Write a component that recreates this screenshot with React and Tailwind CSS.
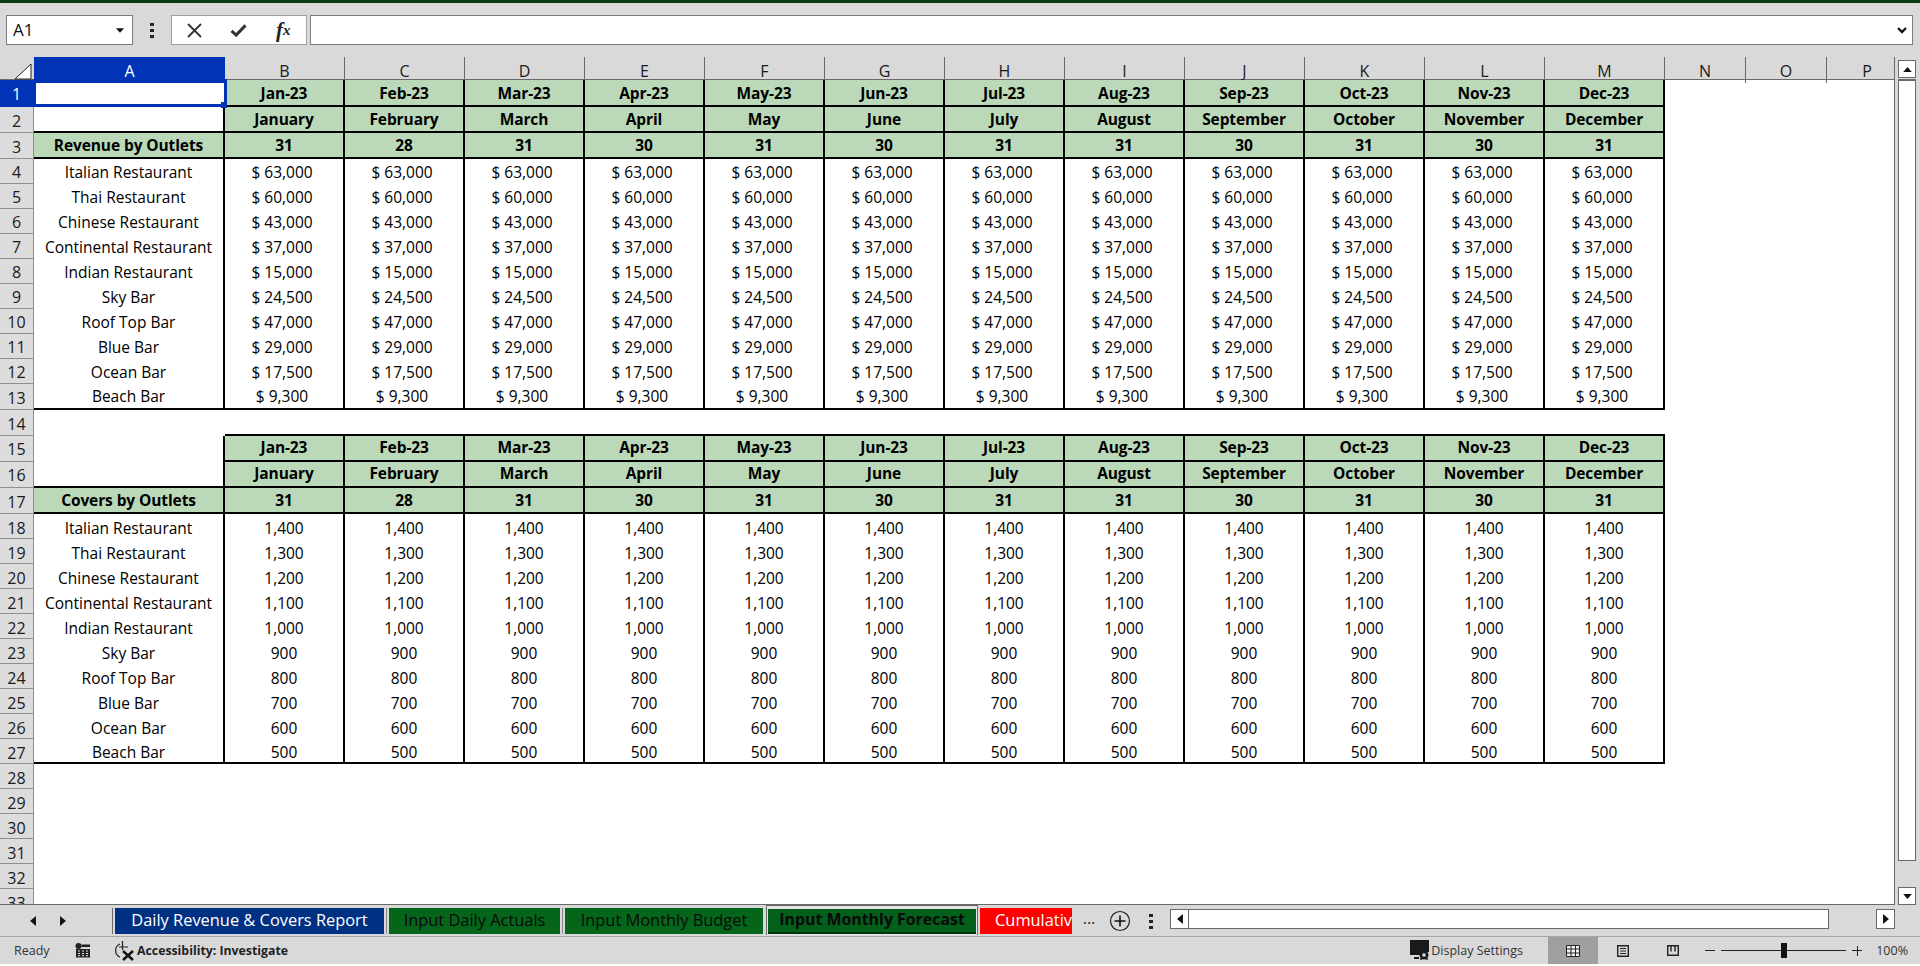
import React from 'react'

const dates = ['Jan-23', 'Feb-23', 'Mar-23', 'Apr-23', 'May-23', 'Jun-23', 'Jul-23', 'Aug-23', 'Sep-23', 'Oct-23', 'Nov-23', 'Dec-23']
const months = ['January', 'February', 'March', 'April', 'May', 'June', 'July', 'August', 'September', 'October', 'November', 'December']
const days = ['31', '28', '31', '30', '31', '30', '31', '31', '30', '31', '30', '31']
const letters = ['A', 'B', 'C', 'D', 'E', 'F', 'G', 'H', 'I', 'J', 'K', 'L', 'M', 'N', 'O', 'P']

const outlets = [
  ['Italian Restaurant', '$ 63,000', '1,400'],
  ['Thai Restaurant', '$ 60,000', '1,300'],
  ['Chinese Restaurant', '$ 43,000', '1,200'],
  ['Continental Restaurant', '$ 37,000', '1,100'],
  ['Indian Restaurant', '$ 15,000', '1,000'],
  ['Sky Bar', '$ 24,500', '900'],
  ['Roof Top Bar', '$ 47,000', '800'],
  ['Blue Bar', '$ 29,000', '700'],
  ['Ocean Bar', '$ 17,500', '600'],
  ['Beach Bar', '$ 9,300', '500'],
]

const GRID = 'grid grid-cols-[34px_191px_repeat(12,120px)_81px_81px_81px]'
const GREEN = 'bg-[#bbd9b9] font-bold text-[15.2px] tracking-[-0.1px] border-r-2 border-b-2 border-black'

function Tri({ dir, className = '' }) {
  const pts = { left: '7,0 7,12 0,6', right: '0,0 0,12 7,6', up: '0,7 12,7 6,0', down: '0,0 12,0 6,7' }
  const box = dir === 'left' || dir === 'right' ? '0 0 7 12' : '0 0 12 7'
  return (
    <svg viewBox={box} className={className}>
      <polygon points={pts[dir]} fill="#111" />
    </svg>
  )
}

function RowHead({ n, active, top = 'top-[2px]' }) {
  return (
    <div className={`flex items-center justify-center border-r border-b text-[16px] ${active ? 'bg-[#0033b5] text-white border-[#0033b5]' : 'bg-[#dcdcdc] text-[#1a1a1a] border-[#8f8f8f]'}`}>
      <span className={`relative ${top}`}>{n}</span>
    </div>
  )
}

function Cell({ className = '', top = 'top-[2px]', children }) {
  return (
    <div className={`flex items-center justify-center text-[15.5px] text-black ${className}`}>
      <span className={`relative ${top}`}>{children}</span>
    </div>
  )
}

function Row({ n, h, active, a, aClass = '', values, cellClass = '', top }) {
  return (
    <div className={`${GRID} ${h}`}>
      <RowHead n={n} active={active} top={top} />
      <Cell className={`relative ${aClass}`} top={top}>{a}</Cell>
      {values && values.map((v, i) => (
        <Cell key={i} className={cellClass} top={top}>{v}</Cell>
      ))}
    </div>
  )
}

function DataRows({ start, col, lastTall, cellExtra = '', top }) {
  return outlets.map((o, i) => (
    <Row
      key={o[0]}
      n={start + i}
      h={lastTall && i === 9 ? 'h-[26px]' : 'h-[25px]'}
      top={top}
      a={o[0]}
      aClass={`border-r-2 border-black ${i === 9 ? 'border-b-2' : ''}`}
      values={Array(12).fill(o[col])}
      cellClass={`border-r-2 border-black ${cellExtra} ${i === 9 ? 'border-b-2' : ''}`}
    />
  ))
}

function Sheet() {
  return (
    <div className="w-[1895px] h-full overflow-hidden bg-white border-r border-b border-[#6a6a6a]">
      <div className={`${GRID} h-[23px] bg-[#d9d9d9] border-b border-[#6a6a6a]`}>
        <div className="flex items-end justify-end pb-[3px] pr-[2px]">
          <svg viewBox="0 0 18 17" className="w-[18px] h-[17px]">
            <polygon points="17,1 17,16 1,16" fill="#fff" stroke="#222" strokeWidth="1" />
          </svg>
        </div>
        {letters.map((l, i) => (
          <div
            key={l}
            className={`flex items-center justify-center text-[16px] pt-[2px] ${i === 0 ? 'bg-[#0033b5] text-white' : 'text-[#1a1a1a] border-r border-[#6a6a6a]'}`}
          >
            {l}
          </div>
        ))}
      </div>

      <div className={`${GRID} h-[27px]`}>
        <RowHead n={1} active top="top-px" />
        <div className="relative">
          <div className="absolute -left-px -top-px w-[194px] h-[28px] border-[3px] border-[#0033b5] z-10" />
          <div className="absolute left-[187px] top-[22px] w-[6px] h-[6px] bg-[#0033b5] z-10" />
        </div>
        {dates.map((d) => <Cell key={d} className={GREEN} top="top-px">{d}</Cell>)}
      </div>
      <Row n={2} h="h-[26px]" top="top-px" aClass="border-r-2 border-b-2 border-black" values={months} cellClass={GREEN} />
      <Row n={3} h="h-[26px]" top="top-px" a="Revenue by Outlets" aClass={GREEN} values={days} cellClass={GREEN} />
      <DataRows start={4} col={1} lastTall cellExtra="pr-[4px]" top="top-px" />

      <Row n={14} h="h-[26px]" top="top-px" values={Array(12).fill('')} cellClass="border-b-2 border-black" />
      <Row n={15} h="h-[26px]" top="top-0" aClass="border-r-2 border-black" values={dates} cellClass={GREEN} />
      <Row n={16} h="h-[26px]" top="top-0" aClass="border-r-2 border-b-2 border-black" values={months} cellClass={GREEN} />
      <Row n={17} h="h-[26px]" top="top-px" a="Covers by Outlets" aClass={GREEN} values={days} cellClass={GREEN} />
      <DataRows start={18} col={2} />

      {[28, 29, 30, 31, 32, 33].map((n) => <Row key={n} n={n} h="h-[25px]" />)}
    </div>
  )
}

function FormulaBar() {
  return (
    <div className="h-[54px] bg-[#d9d9d9] flex items-start pt-[12px] pl-[6px] pr-[7px] shrink-0">
      <div className="w-[127px] h-[30px] bg-white border border-[#7d7d7d] flex items-center justify-between pl-[6px] pr-[8px] text-[17px] text-[#111]">
        A1
        <Tri dir="down" className="w-[8px] h-[5px]" />
      </div>
      <div className="w-[38px] h-[30px] flex flex-col items-center justify-center gap-[3px]">
        <div className="w-[4px] h-[3px] bg-[#222]" />
        <div className="w-[4px] h-[3px] bg-[#222]" />
        <div className="w-[4px] h-[3px] bg-[#222]" />
      </div>
      <div className="w-[136px] h-[30px] bg-white border border-[#a0a0a0] flex items-center text-[#222]">
        <div className="w-[45px] flex justify-center">
          <svg viewBox="0 0 15 15" className="w-[15px] h-[15px]">
            <path d="M1 1 L14 14 M14 1 L1 14" fill="none" stroke="#333" strokeWidth="1.8" />
          </svg>
        </div>
        <div className="w-[45px] flex justify-center">
          <svg viewBox="0 0 18 14" className="w-[17px] h-[13px]">
            <path d="M1.5 7.5 L6.5 12 L16.5 1.5" fill="none" stroke="#333" strokeWidth="3.2" />
          </svg>
        </div>
        <div className="w-[46px] flex justify-center [font-family:'Liberation_Serif',serif] italic font-bold text-[21px] leading-none">
          f<span className="text-[15px] relative top-[3px]">x</span>
        </div>
      </div>
      <div className="flex-1 h-[30px] ml-[3px] bg-white border border-[#7d7d7d] flex items-center justify-end pr-[5px]">
        <svg viewBox="0 0 10 7" className="w-[10px] h-[7px]">
          <path d="M1 1 L5 5 L9 1" fill="none" stroke="#111" strokeWidth="2.4" />
        </svg>
      </div>
    </div>
  )
}

function VScroll() {
  return (
    <div className="flex-1 bg-[#d9d9d9] pl-[3px] pr-[4px] pt-[3px] flex flex-col">
      <div className="h-[18px] bg-white border border-[#6a6a6a] flex items-center justify-center">
        <Tri dir="up" className="w-[9px] h-[5px]" />
      </div>
      <div className="h-[782px] mt-[1px] bg-white border border-t-2 border-[#6a6a6a]" />
      <div className="h-[18px] mt-[26px] bg-white border border-[#6a6a6a] flex items-center justify-center">
        <Tri dir="down" className="w-[9px] h-[5px]" />
      </div>
    </div>
  )
}

function Tab({ w, className, children }) {
  return (
    <div className={`h-[26px] shrink-0 overflow-hidden whitespace-nowrap flex items-center text-[16.4px] leading-none pb-[2px] ${w} ${className}`}>
      {children}
    </div>
  )
}

function TabBar() {
  return (
    <div className="h-[32px] bg-[#d9d9d9] border-b border-[#a6a6a6] flex items-start pt-[3px] shrink-0">
      <div className="w-[113px] h-[26px] flex items-center pl-[30px] gap-[24px] border-r border-[#6a6a6a]">
        <Tri dir="left" className="w-[6px] h-[10px]" />
        <Tri dir="right" className="w-[6px] h-[10px]" />
      </div>
      <Tab w="w-[269px] ml-[2px] justify-center" className="bg-[#003082] text-white">Daily Revenue &amp; Covers Report</Tab>
      <div className="w-px h-[26px] ml-[2px] mr-[2px] bg-[#8a8a8a]" />
      <Tab w="w-[171px] justify-center" className="bg-[#05651a] text-[#0a0a0a]">Input Daily Actuals</Tab>
      <div className="w-px h-[26px] mx-[2px] bg-[#8a8a8a]" />
      <Tab w="w-[198px] justify-center" className="bg-[#05651a] text-[#0a0a0a]">Input Monthly Budget</Tab>
      <div className="w-[212px] h-[30px] -mt-[3px] ml-[3px] shrink-0 bg-[#e6e6e6] border-x border-t border-[#6a6a6a] px-[1px] pt-[3px]">
        <div className="h-[25px] bg-[#03601a] border-b-2 border-[#00330d] flex items-center justify-center font-bold text-[15.9px] leading-none pb-[1px] text-[#0a0a0a] whitespace-nowrap">
          Input Monthly Forecast
        </div>
      </div>
      <Tab w="w-[92px] ml-[2px] pl-[15px]" className="bg-[#ff0000] text-white">Cumulative</Tab>
      <div className="w-[32px] h-[26px] flex items-center justify-center text-[16px] text-[#222] pb-[6px] pl-[2px]">...</div>
      <div className="w-[32px] h-[26px] flex items-center justify-center">
        <svg viewBox="0 0 22 22" className="w-[22px] h-[22px]">
          <circle cx="11" cy="11" r="9.5" fill="none" stroke="#222" strokeWidth="1.2" />
          <path d="M11 5.5 V16.5 M5.5 11 H16.5" stroke="#111" strokeWidth="1.6" />
        </svg>
      </div>
      <div className="w-[30px] h-[26px] flex flex-col items-center justify-center gap-[3px]">
        <div className="w-[4px] h-[3px] bg-[#222]" />
        <div className="w-[4px] h-[3px] bg-[#222]" />
        <div className="w-[4px] h-[3px] bg-[#222]" />
      </div>
      <div className="w-[659px] h-[20px] mt-[1px] ml-[4px] flex bg-white border border-[#6a6a6a] shrink-0">
        <div className="w-[18px] h-full border-r border-[#6a6a6a] flex items-center justify-center">
          <Tri dir="left" className="w-[6px] h-[10px]" />
        </div>
      </div>
      <div className="w-[19px] h-[20px] mt-[1px] ml-[47px] bg-white border border-[#6a6a6a] flex items-center justify-center shrink-0">
        <Tri dir="right" className="w-[6px] h-[10px]" />
      </div>
    </div>
  )
}

function StatusBar() {
  return (
    <div className="h-[27px] bg-[#d9d9d9] flex items-center text-[12.5px] text-[#333] shrink-0">
      <span className="ml-[14px] w-[61px] relative top-[1px]">Ready</span>
      <svg viewBox="0 0 16 15" className="w-[16px] h-[15px]">
        <circle cx="3.5" cy="3" r="3" fill="#222" />
        <path d="M6.5 1.5 H15 V4 H6.5 Z M1 6 H15 V14.5 H1 Z" fill="#222" />
        <path d="M3 8 H5 M7 8 H9 M11 8 H13 M3 10.5 H5 M7 10.5 H9 M11 10.5 H13 M3 12.7 H5 M7 12.7 H9 M11 12.7 H13" stroke="#e8e8e8" strokeWidth="1" />
      </svg>
      <svg viewBox="0 0 21 20" className="w-[21px] h-[20px] ml-[23px]">
        <path d="M6 3 A7 7 0 0 0 6 16" fill="none" stroke="#222" strokeWidth="1.2" />
        <path d="M8.5 0 V9 M5 6 H14" stroke="#222" strokeWidth="1.2" />
        <path d="M9 10 L19 19 M19 10 L9 19" stroke="#111" strokeWidth="2.4" />
      </svg>
      <span className="ml-[2px] font-bold text-[12.3px] text-[#222] whitespace-nowrap relative top-[1px]">Accessibility: Investigate</span>
      <div className="flex-1" />
      <svg viewBox="0 0 20 21" className="w-[20px] h-[21px]">
        <path d="M0 0 H19 V12 H12 V15 H0 Z" fill="#1a1a1a" />
        <path d="M4 17 H9 V19 H4 Z" fill="#1a1a1a" />
        <circle cx="14" cy="15" r="4.5" fill="#1a1a1a" />
        <path d="M11 20 V18 M17 20 V18 M14 11 V9" stroke="#1a1a1a" strokeWidth="1.4" />
        <rect x="12.5" y="13.5" width="3" height="3" fill="#e8e8e8" />
      </svg>
      <span className="ml-[1px] w-[117px] whitespace-nowrap relative top-[1px]">Display Settings</span>
      <div className="w-[50px] h-full bg-[#9f9f9f] flex items-center justify-center">
        <svg viewBox="0 0 14 12" className="w-[14px] h-[12px] bg-[#f2f2f2]">
          <path d="M.5 .5 H13.5 V11.5 H.5 Z M.5 4 H13.5 M.5 8 H13.5 M5 .5 V11.5 M9.5 .5 V11.5" fill="none" stroke="#222" strokeWidth="1" />
        </svg>
      </div>
      <div className="w-[50px] flex justify-center">
        <svg viewBox="0 0 12 12" className="w-[12px] h-[12px]">
          <path d="M.7 .7 H11.3 V11.3 H.7 Z" fill="none" stroke="#222" strokeWidth="1.4" />
          <path d="M3 3.5 H9 M3 6 H9 M3 8.5 H9" stroke="#222" strokeWidth="1.1" />
        </svg>
      </div>
      <div className="w-[50px] flex justify-center">
        <svg viewBox="0 0 12 11" className="w-[12px] h-[11px]">
          <path d="M.7 .7 H11.3 V10.3 H.7 Z" fill="none" stroke="#222" strokeWidth="1.4" />
          <path d="M4 .7 V6.5 M8 .7 V6.5" stroke="#222" strokeWidth="1.4" />
        </svg>
      </div>
      <div className="ml-[7px] w-[10px] h-px bg-[#222]" />
      <div className="ml-[6px] w-[125px] h-px bg-[#222] relative">
        <div className="absolute left-[60px] -top-[7px] w-[6px] h-[15px] bg-[#111]" />
      </div>
      <div className="ml-[6px] w-[10px] h-[10px] relative">
        <div className="absolute left-0 top-[4.5px] w-[10px] h-px bg-[#222]" />
        <div className="absolute left-[4.5px] top-0 w-px h-[10px] bg-[#222]" />
      </div>
      <span className="ml-[14px] mr-[12px] relative top-[1px]">100%</span>
    </div>
  )
}

export default function App() {
  return (
    <div className="w-[1920px] h-[966px] overflow-hidden bg-white flex flex-col [font-family:'Open_Sans',sans-serif]">
      <div className="h-[3px] bg-[#0a3b17] shrink-0" />
      <FormulaBar />
      <div className="h-[848px] flex shrink-0">
        <Sheet />
        <VScroll />
      </div>
      <TabBar />
      <StatusBar />
    </div>
  )
}
